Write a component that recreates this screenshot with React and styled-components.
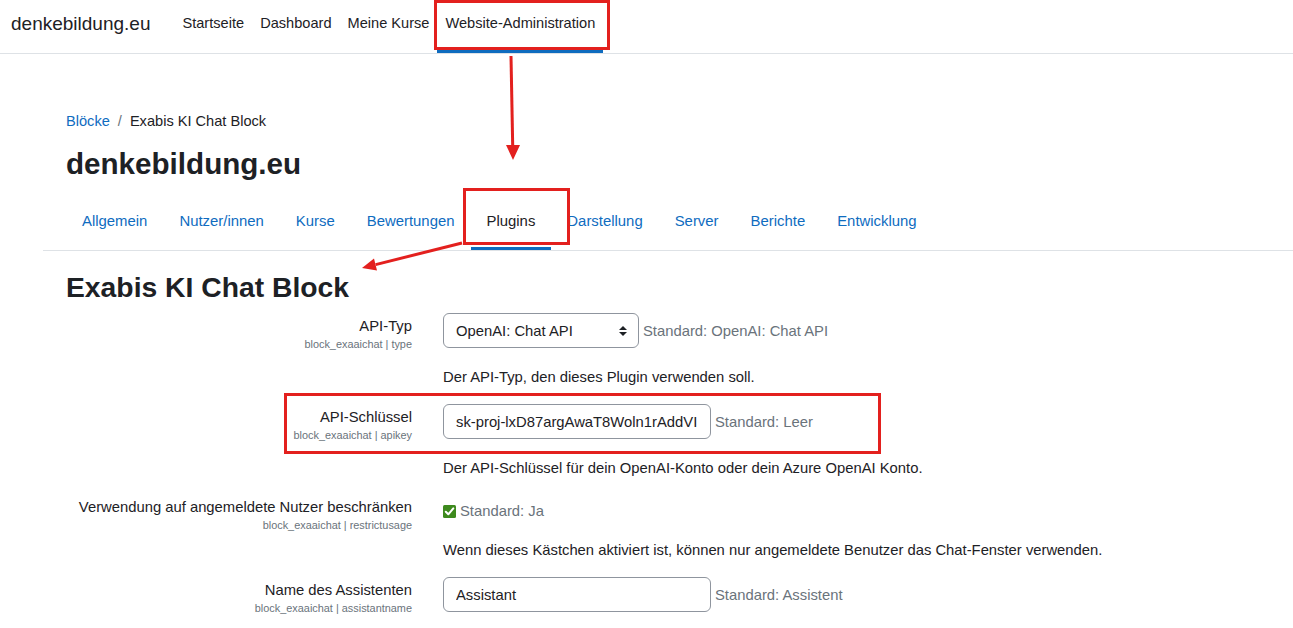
import React from "react";
import styled, { createGlobalStyle } from "styled-components";

const GlobalStyle = createGlobalStyle`
  html, body { margin: 0; padding: 0; background: #fff; }
  body {
    font-family: "Liberation Sans", Arial, sans-serif;
    color: #1d2125;
    font-size: 15px;
  }
  * { box-sizing: border-box; }
`;

const Page = styled.div`
  position: relative;
  width: 1293px;
  height: 628px;
  overflow: hidden;
  background: #fff;
`;

const Navbar = styled.header`
  display: flex;
  align-items: stretch;
  height: 54px;
  padding-left: 11px;
  border-bottom: 1px solid #dee2e6;
`;

const Brand = styled.div`
  align-self: center;
  font-size: 19px;
  margin-right: 24px;
  padding-bottom: 5px;
  color: #1d2125;
`;

const NavList = styled.nav`
  display: flex;
  align-items: stretch;
`;

const NavItem = styled.a`
  display: flex;
  align-items: center;
  padding: 0 8px 4px;
  font-size: 14.6px;
  color: #1d2125;
  text-decoration: none;
  border-bottom: 3px solid ${(p) => (p.$active ? "#0f6cbf" : "transparent")};
`;

const Main = styled.main`
  padding-left: 43px;
  padding-top: 56px;
`;

const Inner = styled.div`
  padding-left: 23px;
`;

const Breadcrumb = styled.div`
  display: flex;
  gap: 8px;
  font-size: 14.6px;
  line-height: 22px;
`;

const Crumb = styled.span`
  color: ${(p) => (p.$link ? "#0f6cbf" : "#1d2125")};
`;

const Sep = styled.span`
  color: #6a737b;
`;

const PageTitle = styled.h1`
  margin: 15px 0 0;
  font-size: 29.6px;
  line-height: 34px;
  font-weight: 700;
`;

const TabNav = styled.nav`
  display: flex;
  margin-top: 10px;
  height: 60px;
  padding-left: 23px;
  border-bottom: 1px solid #dee2e6;
`;

const Tab = styled.a`
  display: flex;
  align-items: center;
  padding: 3px 16px 0;
  font-size: 14.9px;
  color: ${(p) => (p.$active ? "#1d2125" : "#0f6cbf")};
  text-decoration: none;
  border-bottom: 3px solid ${(p) => (p.$active ? "#0f6cbf" : "transparent")};
`;

const SectionTitle = styled.h2`
  margin: 18px 0 8px;
  font-size: 28.3px;
  line-height: 36px;
  font-weight: 700;
`;

const SettingRow = styled.div`
  display: grid;
  grid-template-columns: 346px 1fr;
  column-gap: 31px;
  margin-bottom: 16px;
`;

const LabelCell = styled.div`
  text-align: right;
  padding-top: ${(p) => (p.$check ? "1px" : "2px")};
`;

const LabelText = styled.div`
  font-size: 14.8px;
  line-height: 22px;
`;

const SubText = styled.div`
  font-size: 10.9px;
  line-height: 14px;
  color: #6a737b;
`;

const ValueCell = styled.div`
  display: flex;
  flex-direction: column;
`;

const ControlLine = styled.div`
  display: flex;
  align-items: center;
  gap: 4px;
  height: ${(p) => (p.$check ? "26px" : "35px")};
  padding-top: ${(p) => (p.$check ? "6px" : "0")};
`;

const SelectBox = styled.div`
  display: flex;
  align-items: center;
  justify-content: space-between;
  width: 196px;
  height: 35px;
  padding: 0 10px 0 12px;
  border: 1px solid #8f959e;
  border-radius: 6px;
  font-size: 14.8px;
  color: #1d2125;
`;

const TextInput = styled.input`
  width: 268px;
  height: 35px;
  padding: 0 12px;
  border: 1px solid #8f959e;
  border-radius: 6px;
  font-family: "Liberation Sans", Arial, sans-serif;
  font-size: 14.8px;
  color: #1d2125;
  background: #fff;
  outline: none;
`;

const DefaultText = styled.span`
  color: #6a737b;
  font-size: 14.8px;
`;

const Description = styled.div`
  margin-top: 18px;
  font-size: 14.8px;
  line-height: 22px;
`;

const Overlay = styled.svg`
  position: absolute;
  left: 0;
  top: 0;
  pointer-events: none;
`;

const SelectArrows = () => (
  <svg width="10" height="12" viewBox="0 0 10 12">
    <path d="M1 5 L5 1 L9 5 Z" fill="#1d2125" />
    <path d="M1 7 L5 11 L9 7 Z" fill="#1d2125" />
  </svg>
);

const CheckIcon = () => (
  <svg width="13" height="13" viewBox="0 0 13 13">
    <rect x="0" y="0" width="13" height="13" rx="1.5" fill="#3e8a1e" />
    <path d="M2.8 6.8 L5.3 9.3 L10.3 3.4" stroke="#fff" strokeWidth="2" fill="none" strokeLinecap="round" strokeLinejoin="round" />
  </svg>
);

const topNav = ["Startseite", "Dashboard", "Meine Kurse", "Website-Administration"];
const tabs = ["Allgemein", "Nutzer/innen", "Kurse", "Bewertungen", "Plugins", "Darstellung", "Server", "Berichte", "Entwicklung"];

const Setting = ({ label, sub, check, children, description }) => (
  <SettingRow>
    <LabelCell $check={check}>
      <LabelText>{label}</LabelText>
      <SubText>{sub}</SubText>
    </LabelCell>
    <ValueCell>
      <ControlLine $check={check}>{children}</ControlLine>
      {description && <Description>{description}</Description>}
    </ValueCell>
  </SettingRow>
);

const RED = "#e3201e";

export default function App() {
  return (
    <>
      <GlobalStyle />
      <Page>
        <Navbar>
          <Brand>denkebildung.eu</Brand>
          <NavList>
            {topNav.map((t) => (
              <NavItem key={t} $active={t === "Website-Administration"}>{t}</NavItem>
            ))}
          </NavList>
        </Navbar>
        <Main>
          <Inner>
            <Breadcrumb>
              <Crumb $link>Blöcke</Crumb>
              <Sep>/</Sep>
              <Crumb>Exabis KI Chat Block</Crumb>
            </Breadcrumb>
            <PageTitle>denkebildung.eu</PageTitle>
          </Inner>
          <TabNav>
            {tabs.map((t) => (
              <Tab key={t} $active={t === "Plugins"}>{t}</Tab>
            ))}
          </TabNav>
          <Inner>
            <SectionTitle>Exabis KI Chat Block</SectionTitle>
            <Setting
              label="API-Typ"
              sub="block_exaaichat | type"
              description="Der API-Typ, den dieses Plugin verwenden soll."
            >
              <SelectBox>
                <span>OpenAI: Chat API</span>
                <SelectArrows />
              </SelectBox>
              <DefaultText>Standard: OpenAI: Chat API</DefaultText>
            </Setting>
            <Setting
              label="API-Schlüssel"
              sub="block_exaaichat | apikey"
              description="Der API-Schlüssel für dein OpenAI-Konto oder dein Azure OpenAI Konto."
            >
              <TextInput readOnly defaultValue="sk-proj-lxD87argAwaT8Woln1rAddVI" />
              <DefaultText>Standard: Leer</DefaultText>
            </Setting>
            <Setting
              check
              label="Verwendung auf angemeldete Nutzer beschränken"
              sub="block_exaaichat | restrictusage"
              description="Wenn dieses Kästchen aktiviert ist, können nur angemeldete Benutzer das Chat-Fenster verwenden."
            >
              <CheckIcon />
              <DefaultText>Standard: Ja</DefaultText>
            </Setting>
            <Setting label="Name des Assistenten" sub="block_exaaichat | assistantname">
              <TextInput readOnly defaultValue="Assistant" />
              <DefaultText>Standard: Assistent</DefaultText>
            </Setting>
          </Inner>
        </Main>
        <Overlay width="1293" height="628" viewBox="0 0 1293 628">
          <rect x="435.5" y="1.5" width="173" height="47" fill="none" stroke={RED} strokeWidth="3" />
          <line x1="511" y1="56" x2="512.7" y2="146" stroke={RED} strokeWidth="3" />
          <polygon points="513,160 506,145 520,145" fill={RED} />
          <rect x="464.5" y="189.5" width="104" height="54" fill="none" stroke={RED} strokeWidth="3" />
          <line x1="462" y1="243" x2="375.6" y2="264.6" stroke={RED} strokeWidth="3" />
          <polygon points="362,268 377,270.6 374,258.6" fill={RED} />
          <rect x="285.5" y="394.5" width="594" height="58" fill="none" stroke={RED} strokeWidth="3" />
        </Overlay>
      </Page>
    </>
  );
}
